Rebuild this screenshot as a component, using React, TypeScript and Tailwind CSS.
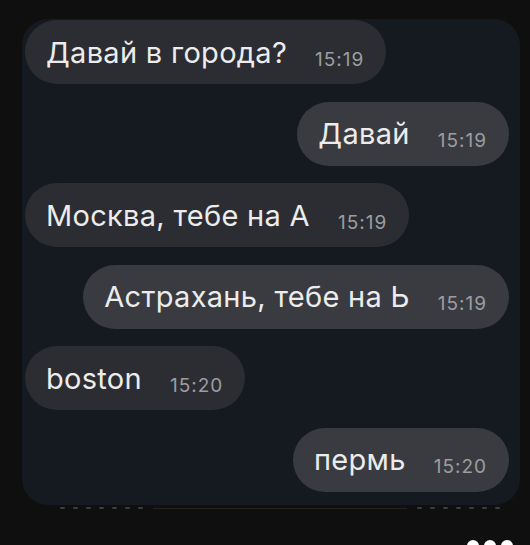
import React from 'react';

interface Message {
  text: string;
  time: string;
  mine: boolean;
}

const messages: Message[] = [
  { text: 'Давай в города?', time: '15:19', mine: false },
  { text: 'Давай', time: '15:19', mine: true },
  { text: 'Москва, тебе на А', time: '15:19', mine: false },
  { text: 'Астрахань, тебе на Ь', time: '15:19', mine: true },
  { text: 'boston', time: '15:20', mine: false },
  { text: 'пермь', time: '15:20', mine: true },
];

const Bubble: React.FC<{ message: Message }> = ({ message }) => (
  <div
    className={`flex h-[64px] items-center rounded-full pl-[21px] pr-[22px] ${
      message.mine ? 'self-end bg-[#3a3b40]' : 'self-start bg-[#2b2d32]'
    }`}
  >
    <span className="text-[29px] leading-none text-[#ececec] tracking-[0.3px]">{message.text}</span>
    <span className="ml-[28px] mt-[14px] text-[19px] leading-none text-[#9c9da0] tracking-[1px]">{message.time}</span>
  </div>
);

export default function App() {
  return (
    <div className="relative h-[545px] w-[530px] overflow-hidden bg-[#0f0f0f] font-['Inter','Noto_Sans',sans-serif]">
      <div className="pl-[22px] pt-[19px]">
        {/* Chat panel */}
        <div className="flex h-[486px] w-[498px] flex-col gap-[17.6px] rounded-[26px] bg-[#151920] pl-[3px] pr-[11px] pt-[1px]">
          {messages.map((m, i) => (
            <Bubble key={i} message={m} />
          ))}
        </div>
        {/* Faint divider under panel */}
        <div className="mt-[2px] flex w-[498px] items-center justify-between pl-[38px] pr-[20px]">
          <div className="flex gap-[8px]">
            {[0, 1, 2, 3, 4, 5, 6].map((i) => (
              <span key={i} className="h-[2px] w-[5px] rounded-full bg-[#3c3d40]" />
            ))}
          </div>
          <div className="mx-[10px] h-[1px] flex-1 bg-[#25241d]" />
          <div className="flex gap-[8px]">
            {[0, 1, 2, 3, 4, 5, 6].map((i) => (
              <span key={i} className="h-[2px] w-[5px] rounded-full bg-[#3c3d40]" />
            ))}
          </div>
        </div>
      </div>
      {/* Overflow dots */}
      <div className="absolute bottom-[-7px] right-[17px] flex gap-[5px]">
        <span className="h-[12px] w-[12px] rounded-full bg-white" />
        <span className="h-[12px] w-[12px] rounded-full bg-white" />
        <span className="h-[12px] w-[12px] rounded-full bg-white" />
      </div>
    </div>
  );
}
